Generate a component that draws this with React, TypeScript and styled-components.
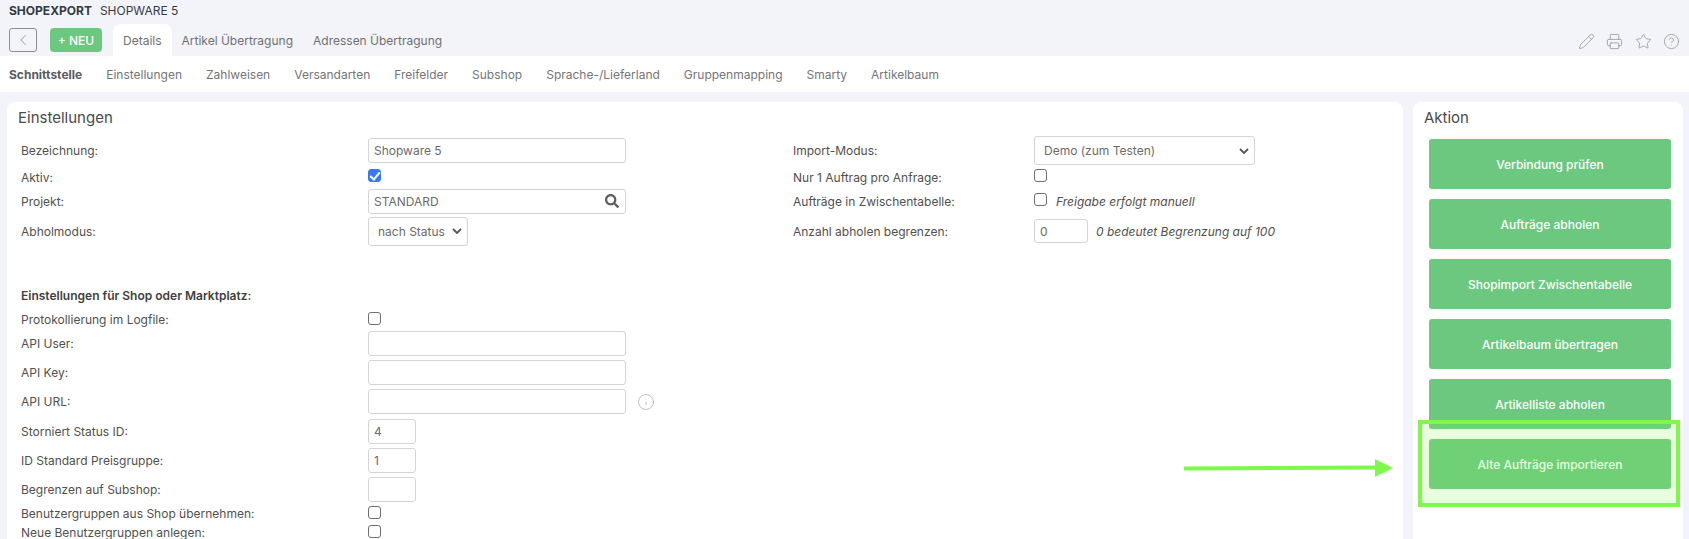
import styled, { createGlobalStyle } from "styled-components";
import { ChevronLeft, Pencil, Printer, Star, CircleHelp, Info } from "lucide-react";
import { FaSearch } from "react-icons/fa";

const GlobalStyle = createGlobalStyle`
  html, body {
    margin: 0;
    padding: 0;
    background: #f3f4f9;
    font-family: Inter, "Liberation Sans", sans-serif;
    font-size: 12px;
    color: #505050;
  }
  * { box-sizing: border-box; }
`;

const Page = styled.div`
  position: relative;
  width: 1689px;
  height: 539px;
  overflow: hidden;
`;

const TitleBar = styled.div`
  height: 24px;
  padding: 3px 0 0 9px;
  display: flex;
  gap: 8px;
  font-size: 12px;
  line-height: 15px;
  color: #333a44;
`;
const TitleStrong = styled.span`
  font-weight: 700;
`;

const TabBar = styled.div`
  height: 32px;
  display: flex;
  align-items: flex-start;
  padding-left: 9px;
`;
const BackButton = styled.button`
  width: 28px;
  height: 24px;
  margin-top: 4px;
  padding: 0;
  display: flex;
  align-items: center;
  justify-content: center;
  background: transparent;
  border: 1px solid #8c8c8c;
  border-radius: 3px;
  color: #7a7a7a;
`;
const NewButton = styled.button`
  width: 52px;
  height: 24px;
  margin: 4px 11px 0 13px;
  padding: 0;
  background: #6cc77f;
  border: 0;
  border-radius: 4px;
  color: #fff;
  font: 500 12px Inter, sans-serif;
`;
const Tab = styled.div<{ $active?: boolean }>`
  height: 32px;
  line-height: 34px;
  padding: 0 10px;
  color: #6f7075;
  background: ${(p) => (p.$active ? "#fff" : "transparent")};
  border-radius: 8px 8px 0 0;
`;
const ToolIcons = styled.div`
  margin-left: auto;
  padding: 9px 9px 0 0;
  display: flex;
  gap: 11.5px;
  color: #8a8a8a;
`;

const SubNav = styled.nav`
  height: 36px;
  background: #fff;
  display: flex;
  align-items: center;
  gap: 24px;
  padding: 0 0 0 9px;
`;
const SubNavItem = styled.span<{ $active?: boolean }>`
  color: ${(p) => (p.$active ? "#5a5a5f" : "#74757a")};
  font-weight: ${(p) => (p.$active ? 700 : 400)};
`;

const Columns = styled.div`
  display: flex;
  gap: 10px;
  padding: 10px 6px 0 7px;
`;
const Panel = styled.section<{ $width: number }>`
  width: ${(p) => p.$width}px;
  height: 460px;
  flex-shrink: 0;
  background: #fff;
  border-radius: 8px;
`;
const PanelTitle = styled.h2`
  margin: 0;
  height: 34px;
  padding: 6px 0 0 11px;
  font-size: 15px;
  line-height: 19px;
  font-weight: 400;
  color: #4a4a4a;
`;

const FormGrid = styled.div`
  display: grid;
  grid-template-columns: 772px 1fr;
`;
const FormColumn = styled.div`
  padding-left: 14px;
`;
const Row = styled.div<{ $h: number; $top?: number; $label?: number }>`
  display: grid;
  grid-template-columns: ${(p) => p.$label ?? 347}px 1fr;
  align-items: center;
  height: ${(p) => p.$h}px;
  margin-top: ${(p) => p.$top ?? 0}px;
`;
const SectionHeading = styled.div`
  height: 20px;
  margin-top: 37px;
  margin-bottom: 4px;
  line-height: 20px;
  font-weight: 600;
  color: #3f3f3f;
`;
const Label = styled.label`
  color: #505050;
`;
const Control = styled.div`
  position: relative;
  display: flex;
  align-items: center;
`;
const TextInput = styled.input<{ $w: number }>`
  width: ${(p) => p.$w}px;
  height: 24.5px;
  padding: 0 5px;
  background: #fff;
  border: 1px solid #d4d4d4;
  border-radius: 3px;
  color: #6b6b6b;
  font: 12px Inter, sans-serif;
  outline: none;
`;
const Select = styled.select<{ $w: number }>`
  appearance: none;
  width: ${(p) => p.$w}px;
  height: 29px;
  padding: 0 9px;
  background: #fff url("data:image/svg+xml,%3Csvg xmlns='http://www.w3.org/2000/svg' width='10' height='6'%3E%3Cpath d='M1 1l4 4 4-4' fill='none' stroke='%23555' stroke-width='1.8'/%3E%3C/svg%3E") no-repeat right 5px center;
  border: 1px solid #d4d4d4;
  border-radius: 3px;
  color: #6b6b6b;
  font: 12px Inter, sans-serif;
`;
const Checkbox = styled.input.attrs({ type: "checkbox" })`
  appearance: none;
  position: relative;
  width: 13px;
  height: 13px;
  margin: 0 0 3px;
  background: #fff;
  border: 1px solid #6e6e6e;
  border-radius: 3px;
  &:checked {
    background: #3b77f0;
    border-color: #3b77f0;
  }
  &:checked::after {
    content: "";
    position: absolute;
    left: 3px;
    top: 0;
    width: 4px;
    height: 8px;
    border: solid #fff;
    border-width: 0 2px 2px 0;
    transform: rotate(40deg);
  }
`;
const Hint = styled.em<{ $gap: number }>`
  margin-left: ${(p) => p.$gap}px;
  color: #505050;
`;
const SearchIcon = styled.span`
  position: absolute;
  left: 237px;
  top: 50%;
  transform: translateY(-50%);
  display: flex;
  color: #5d5d5d;
`;
const InfoIcon = styled.span`
  display: flex;
  margin-left: 11px;
  color: #a9a9a9;
`;

const ActionList = styled.div`
  display: flex;
  flex-direction: column;
  gap: 10px;
  padding: 3px 12px 0 16px;
`;
const ActionButton = styled.button`
  height: 50px;
  background: #6cc77f;
  border: 0;
  border-radius: 3px;
  color: #fff;
  font: 500 12px Inter, sans-serif;
`;

/* annotation drawn on top of the screenshot */
const Highlight = styled.div`
  position: absolute;
  left: 1418px;
  top: 420px;
  width: 262px;
  height: 87px;
  border: 4px solid #7ef84a;
  background: rgba(126, 248, 74, 0.18);
`;
const Arrow = styled.svg`
  position: absolute;
  left: 1184px;
  top: 457px;
`;

const subNav = ["Einstellungen", "Zahlweisen", "Versandarten", "Freifelder", "Subshop", "Sprache-/Lieferland", "Gruppenmapping", "Smarty", "Artikelbaum"];
const actions = ["Verbindung prüfen", "Aufträge abholen", "Shopimport Zwischentabelle", "Artikelbaum übertragen", "Artikelliste abholen", "Alte Aufträge importieren"];

const App = () => {
  return (
    <Page>
      <GlobalStyle />
      <TitleBar>
        <TitleStrong>SHOPEXPORT</TitleStrong>
        <span>SHOPWARE 5</span>
      </TitleBar>
      <TabBar>
        <BackButton><ChevronLeft size={18} strokeWidth={1} /></BackButton>
        <NewButton>+ NEU</NewButton>
        <Tab $active>Details</Tab>
        <Tab>Artikel Übertragung</Tab>
        <Tab>Adressen Übertragung</Tab>
        <ToolIcons>
          <Pencil size={17} strokeWidth={1} />
          <Printer size={17} strokeWidth={1} />
          <Star size={17} strokeWidth={1} />
          <CircleHelp size={17} strokeWidth={1} />
        </ToolIcons>
      </TabBar>
      <SubNav>
        <SubNavItem $active>Schnittstelle</SubNavItem>
        {subNav.map((item) => (
          <SubNavItem key={item}>{item}</SubNavItem>
        ))}
      </SubNav>
      <Columns>
        <Panel $width={1396}>
          <PanelTitle>Einstellungen</PanelTitle>
          <FormGrid>
            <FormColumn>
              <Row $h={29}>
                <Label>Bezeichnung:</Label>
                <Control><TextInput $w={258} defaultValue="Shopware 5" /></Control>
              </Row>
              <Row $h={24}>
                <Label>Aktiv:</Label>
                <Control><Checkbox defaultChecked /></Control>
              </Row>
              <Row $h={24}>
                <Label>Projekt:</Label>
                <Control>
                  <TextInput $w={258} defaultValue="STANDARD" />
                  <SearchIcon><FaSearch size={14} /></SearchIcon>
                </Control>
              </Row>
              <Row $h={36}>
                <Label>Abholmodus:</Label>
                <Control><Select $w={100}><option>nach Status</option></Select></Control>
              </Row>
              <SectionHeading>Einstellungen für Shop oder Marktplatz:</SectionHeading>
              <Row $h={19}>
                <Label>Protokollierung im Logfile:</Label>
                <Control><Checkbox /></Control>
              </Row>
              <Row $h={29}>
                <Label>API User:</Label>
                <Control><TextInput $w={258} /></Control>
              </Row>
              <Row $h={29}>
                <Label>API Key:</Label>
                <Control><TextInput $w={258} /></Control>
              </Row>
              <Row $h={29}>
                <Label>API URL:</Label>
                <Control>
                  <TextInput $w={258} />
                  <InfoIcon><Info size={18} strokeWidth={1} /></InfoIcon>
                </Control>
              </Row>
              <Row $h={29} $top={1}>
                <Label>Storniert Status ID:</Label>
                <Control><TextInput $w={48} defaultValue="4" /></Control>
              </Row>
              <Row $h={29}>
                <Label>ID Standard Preisgruppe:</Label>
                <Control><TextInput $w={48} defaultValue="1" /></Control>
              </Row>
              <Row $h={29}>
                <Label>Begrenzen auf Subshop:</Label>
                <Control><TextInput $w={48} /></Control>
              </Row>
              <Row $h={19}>
                <Label>Benutzergruppen aus Shop übernehmen:</Label>
                <Control><Checkbox /></Control>
              </Row>
              <Row $h={19}>
                <Label>Neue Benutzergruppen anlegen:</Label>
                <Control><Checkbox /></Control>
              </Row>
            </FormColumn>
            <FormColumn>
              <Row $h={29} $label={241}>
                <Label>Import-Modus:</Label>
                <Control><Select $w={221}><option>Demo (zum Testen)</option></Select></Control>
              </Row>
              <Row $h={24} $label={241}>
                <Label>Nur 1 Auftrag pro Anfrage:</Label>
                <Control><Checkbox /></Control>
              </Row>
              <Row $h={24} $label={241}>
                <Label>Aufträge in Zwischentabelle:</Label>
                <Control><Checkbox /><Hint $gap={9}>Freigabe erfolgt manuell</Hint></Control>
              </Row>
              <Row $h={36} $label={241}>
                <Label>Anzahl abholen begrenzen:</Label>
                <Control><TextInput $w={54} defaultValue="0" /><Hint $gap={8}>0 bedeutet Begrenzung auf 100</Hint></Control>
              </Row>
            </FormColumn>
          </FormGrid>
        </Panel>
        <Panel $width={270}>
          <PanelTitle>Aktion</PanelTitle>
          <ActionList>
            {actions.map((a) => (
              <ActionButton key={a}>{a}</ActionButton>
            ))}
          </ActionList>
        </Panel>
      </Columns>
      <Highlight />
      <Arrow width="210" height="22" viewBox="0 0 210 22">
        <path d="M0 11.5 L192 10.5" stroke="#7ef84a" strokeWidth="4" fill="none" />
        <path d="M191 2 L209 11 L191 20 Z" fill="#7ef84a" />
      </Arrow>
    </Page>
  );
};

export default App;
